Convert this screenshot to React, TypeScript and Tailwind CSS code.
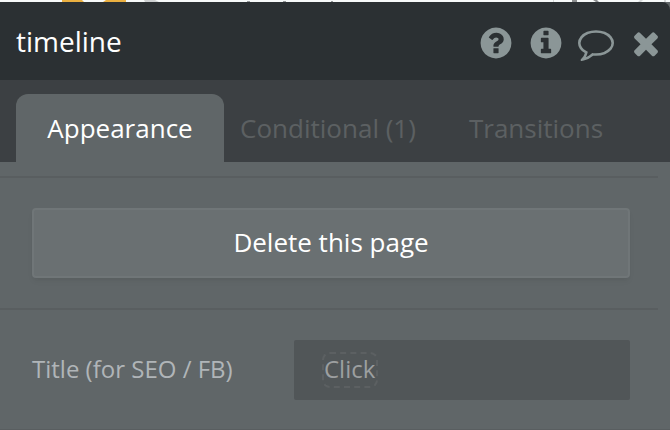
import type { ReactNode } from 'react';

interface IconButtonProps {
  label: string;
  children: ReactNode;
}

function IconButton({ label, children }: IconButtonProps) {
  return (
    <button type="button" aria-label={label} className="text-[#8b9697] hover:text-white">
      <svg viewBox="0 0 1792 1792" className="h-9 w-9" fill="currentColor" aria-hidden="true">
        {children}
      </svg>
    </button>
  );
}

// bottom edge of the editor toolbar, showing above the panel
function ToolbarEdge() {
  return (
    <svg className="h-0.5 w-full bg-[#f7fafa]" viewBox="0 0 670 2" preserveAspectRatio="none" aria-hidden="true">
      <path d="M62 0H82L84 2H62ZM106 0H126V2H103Z" fill="#ebb041" />
      <path d="M144 0H155L159 2H145Z" fill="#cdd0d1" />
      <path d="M247 1h3v1h-3zM283 1h3v1h-3zM331 1h2v1h-2z" fill="#96999b" />
      <path d="M553 0h1v2h-1zM640 0h3l-2 2h-3zM664 0h2v2h-2z" fill="#d5d8d9" />
      <path d="M572 0h5v2h-5zM593 0h4l2 2h-3z" fill="#8b8d8f" />
    </svg>
  );
}

function Header() {
  return (
    <header className="flex h-[78px] items-center justify-between rounded-tr-lg bg-[#2b3033] pl-4 pr-1.5">
      <h1 className="text-[28px] leading-9 text-white">timeline</h1>
      <div className="flex items-center gap-3.5 pt-1">
        <IconButton label="Help">
          <path d="M1024 1376v-192q0-14-9-23t-23-9h-192q-14 0-23 9t-9 23v192q0 14 9 23t23 9h192q14 0 23-9t9-23zm256-672q0-88-55.5-163t-138.5-116-170-41q-243 0-371 213-15 24 8 42l132 100q7 6 19 6 16 0 25-12 53-68 86-92 34-24 86-24 48 0 85.5 26t37.5 59q0 38-20 61t-68 45q-63 28-115.5 86.5t-52.5 125.5v36q0 14 9 23t23 9h192q14 0 23-9t9-23q0-19 21.5-49.5t54.5-49.5q32-18 49-28.5t46-35 44.5-48 28-60.5 12.5-81zm384 192q0 209-103 385.5t-279.5 279.5-385.5 103-385.5-103-279.5-279.5-103-385.5 103-385.5 279.5-279.5 385.5-103 385.5 103 279.5 279.5 103 385.5z" />
        </IconButton>
        <IconButton label="Info">
          <path d="M1152 1376v-160q0-14-9-23t-23-9h-96v-512q0-14-9-23t-23-9h-320q-14 0-23 9t-9 23v160q0 14 9 23t23 9h96v320h-96q-14 0-23 9t-9 23v160q0 14 9 23t23 9h448q14 0 23-9t9-23zm-128-896v-160q0-14-9-23t-23-9h-192q-14 0-23 9t-9 23v160q0 14 9 23t23 9h192q14 0 23-9t9-23zm640 416q0 209-103 385.5t-279.5 279.5-385.5 103-385.5-103-279.5-279.5-103-385.5 103-385.5 279.5-279.5 385.5-103 385.5 103 279.5 279.5 103 385.5z" />
        </IconButton>
        <IconButton label="Comments">
          <path d="M896 384q-204 0-381.5 69.5t-282 187.5-104.5 255q0 112 71.5 213.5t201.5 175.5l87 50-27 96q-24 91-70 172 152-63 275-171l43-38 57 6q69 8 130 8 204 0 381.5-69.5t282-187.5 104.5-255-104.5-255-282-187.5-381.5-69.5zm896 512q0 174-120 321.5t-326 233-450 85.5q-70 0-145-8-198 175-460 242-49 14-114 22h-5q-15 0-27-10.5t-16-27.5v-1q-3-4-.5-12t2-10 4.5-9.5l6-9 7-8.5 8-9q7-8 31-34.5t34.5-38 31-39.5 32.5-51 27-59 26-76q-157-89-247.5-220t-90.5-281q0-174 120-321.5t326-233 450-85.5 450 85.5 326 233 120 321.5z" />
        </IconButton>
        <IconButton label="Close">
          <path d="M1490 1322q0 40-28 68l-136 136q-28 28-68 28t-68-28l-294-294-294 294q-28 28-68 28t-68-28l-136-136q-28-28-28-68t28-68l294-294-294-294q-28-28-28-68t28-68l136-136q28-28 68-28t68 28l294 294 294-294q28-28 68-28t68 28l136 136q28 28 28 68t-28 68l-294 294 294 294q28 28 28 68z" />
        </IconButton>
      </div>
    </header>
  );
}

function Tabs() {
  return (
    <div role="tablist" className="flex bg-[#3c4043] px-4 pt-3.5 text-[26px] leading-9 text-[#5c6062]">
      <button type="button" role="tab" aria-selected="true" className="h-[68px] w-52 rounded-t-xl bg-[#606668] text-white">
        Appearance
      </button>
      <button type="button" role="tab" aria-selected="false" className="h-[68px] w-52">
        Conditional (1)
      </button>
      <button type="button" role="tab" aria-selected="false" className="h-[68px] w-52">
        Transitions
      </button>
    </div>
  );
}

export default function App() {
  return (
    <div className="min-h-screen bg-[#606668] font-['Open_Sans',sans-serif]">
      <ToolbarEdge />
      <Header />
      <Tabs />
      <main className="pr-3 pt-3.5">
        <section className="border-t-2 border-[#595e60] pb-[30px] pl-8 pr-7 pt-[30px]">
          <button
            type="button"
            className="h-[70px] w-full rounded border-2 border-[#707678] bg-[#6a7072] pb-0.5 text-[26px] leading-9 text-white shadow-md shadow-black/5"
          >
            Delete this page
          </button>
        </section>
        <section className="flex items-center border-t-2 border-[#595e60] pb-[29px] pl-8 pr-7 pt-[30px]">
          <label htmlFor="seo-title" className="w-[262px] shrink-0 pb-0.5 text-2xl leading-9 text-[#b0b5b8]">
            Title (for SEO / FB)
          </label>
          <div className="flex h-[60px] flex-1 items-center rounded-xs bg-[#515658] px-7">
            <input
              id="seo-title"
              type="text"
              placeholder="Click"
              className="h-9 w-14 rounded-lg border-2 border-dashed border-[#5c6062] pb-1 text-2xl leading-7 text-[#9c9fa0] outline-none placeholder:text-[#9c9fa0]"
            />
          </div>
        </section>
      </main>
      <div className="h-px bg-[#595e60]" />
    </div>
  );
}
